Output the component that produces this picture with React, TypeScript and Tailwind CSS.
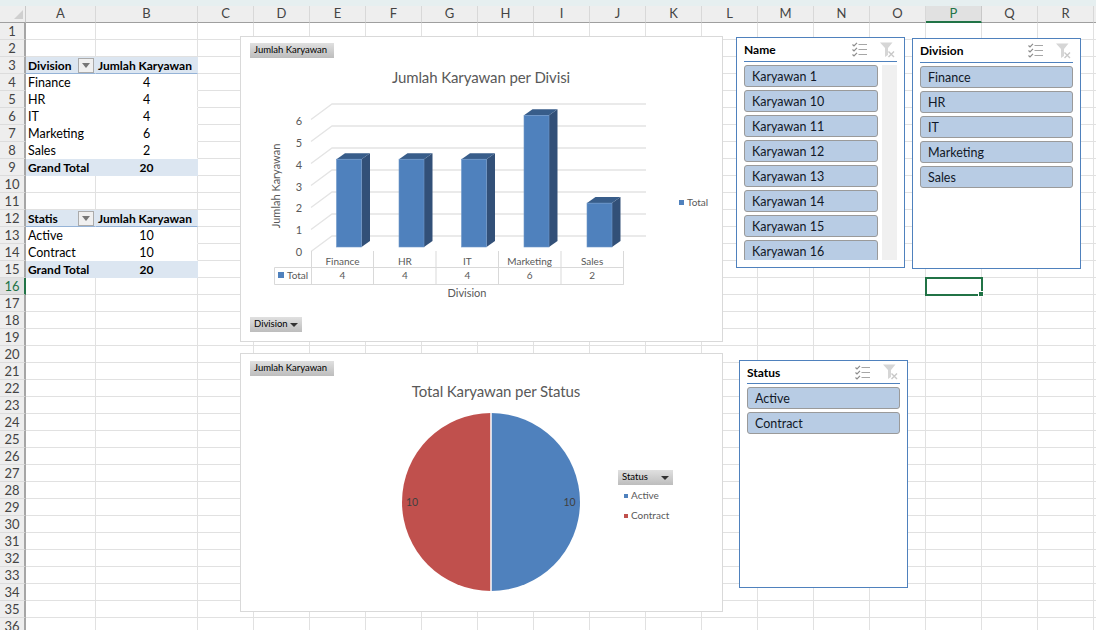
import React from "react";

const columns = ["A","B","C","D","E","F","G","H","I","J","K","L","M","N","O","P","Q","R","S"];
const rows = Array.from({ length: 36 }, (_, i) => i + 1);

type Cell = { text: string; kind: "head" | "label" | "value" | "total" | "totalValue" | "headValue"; filter?: boolean };
const pivot: Record<string, Cell> = {
  A3: { text: "Division", kind: "head", filter: true },
  B3: { text: "Jumlah Karyawan", kind: "headValue" },
  A4: { text: "Finance", kind: "label" }, B4: { text: "4", kind: "value" },
  A5: { text: "HR", kind: "label" }, B5: { text: "4", kind: "value" },
  A6: { text: "IT", kind: "label" }, B6: { text: "4", kind: "value" },
  A7: { text: "Marketing", kind: "label" }, B7: { text: "6", kind: "value" },
  A8: { text: "Sales", kind: "label" }, B8: { text: "2", kind: "value" },
  A9: { text: "Grand Total", kind: "total" }, B9: { text: "20", kind: "totalValue" },
  A12: { text: "Statis", kind: "head", filter: true },
  B12: { text: "Jumlah Karyawan", kind: "headValue" },
  A13: { text: "Active", kind: "label" }, B13: { text: "10", kind: "value" },
  A14: { text: "Contract", kind: "label" }, B14: { text: "10", kind: "value" },
  A15: { text: "Grand Total", kind: "total" }, B15: { text: "20", kind: "totalValue" },
};

const kindClass: Record<Cell["kind"], string> = {
  head: "bg-[#dce6f1] border-b-[#95b3d7] border-r-[#dce6f1] font-bold text-[12px] pl-[2px] justify-between",
  headValue: "bg-[#dce6f1] border-b-[#95b3d7] border-r-[#dce6f1] font-bold text-[12px] justify-center pr-[3px]",
  label: "bg-white border-b-white border-r-white text-[12.5px] pl-[2px]",
  value: "bg-white border-b-white border-r-[#e1e1e1] text-[12.5px] justify-center",
  total: "bg-[#dce6f1] border-b-[#dce6f1] border-r-[#dce6f1] font-bold text-[12px] pl-[2px]",
  totalValue: "bg-[#dce6f1] border-b-[#dce6f1] border-r-[#dce6f1] font-bold text-[12px] justify-center",
};

const textPad: Record<Cell["kind"], string> = {
  head: "pt-[1px]",
  headValue: "pt-[1px]",
  label: "pt-[3px]",
  value: "pt-[3px]",
  total: "pt-[1px]",
  totalValue: "pt-[1px]",
};

function FilterButton() {
  return (
    <span className="flex h-[15px] w-[16px] shrink-0 items-center justify-center border border-[#ababab] bg-[#f0f0f0] mr-px">
      <svg width="8" height="5" viewBox="0 0 8 5"><path d="M0 0h8L4 5z" fill="#777" /></svg>
    </span>
  );
}

function Sheet() {
  return (
    <div className="grid grid-cols-[26px_70px_102px_repeat(17,56px)] auto-rows-[17px] text-[13px] text-black">
      <div className="relative border-b border-r border-b-[#9f9f9f] border-r-[#c8c8c8] bg-[#eeeeee]">
        <svg className="absolute left-[14px] top-[4px]" width="9" height="9" viewBox="0 0 9 9"><path d="M9 0v9H0z" fill="#cfcfcf" /></svg>
      </div>
      {columns.map((c) =>
        c === "P" ? (
          <div key={c} className="flex items-center justify-center border-b-2 border-r border-b-[#217346] border-r-[#c8c8c8] bg-[#e1e1e1] text-[#217346]">{c}</div>
        ) : (
          <div key={c} className="flex items-center justify-center border-b border-r border-b-[#9f9f9f] border-r-[#d8d8d8] bg-[#eeeeee] text-[#444444]">{c}</div>
        ),
      )}
      {rows.map((r) => (
        <React.Fragment key={r}>
          {r === 16 ? (
            <div className="flex items-center justify-center border-b border-r-2 border-b-[#c8c8c8] border-r-[#217346] bg-[#e1e1e1] pt-[1px] text-[#217346]">{r}</div>
          ) : (
            <div className="flex items-center justify-center border-b border-r-2 border-b-[#dcdcdc] border-r-[#a6a6a6] bg-[#eeeeee] pt-[1px] text-[#444444]">{r}</div>
          )}
          {columns.map((c) => {
            const cell = pivot[`${c}${r}`];
            if (cell) {
              return (
                <div key={c} className={`flex items-center whitespace-nowrap border-b border-r ${kindClass[cell.kind]}`}>
                  <span className={textPad[cell.kind]}>{cell.text}</span>
                  {cell.filter && <FilterButton />}
                </div>
              );
            }
            return (
              <div key={c} className="relative border-b border-r border-b-[#e1e1e1] border-r-[#e1e1e1] bg-white">
                {c === "P" && r === 16 && (
                  <div className="absolute -left-px -top-px z-10 h-[19px] w-[58px] border-2 border-[#217346]">
                    <span className="absolute -bottom-[3px] -right-[3px] h-[6px] w-[6px] border border-white bg-[#217346]" />
                  </div>
                )}
              </div>
            );
          })}
        </React.Fragment>
      ))}
    </div>
  );
}

function FieldButton({ label, arrow, className }: { label: string; arrow?: boolean; className: string }) {
  return (
    <div className={`absolute flex h-[15px] items-center justify-between whitespace-nowrap bg-gradient-to-b from-[#e0e0e0] to-[#bdbdbd] pl-[4px] pr-[4px] text-[9.5px] text-black ${className}`}>
      <span>{label}</span>
      {arrow && <svg width="8" height="4" viewBox="0 0 8 4"><path d="M0 0h8L4 4z" fill="#333" /></svg>}
    </div>
  );
}

const bars = [
  { name: "Finance", value: 4, x: 336.5 },
  { name: "HR", value: 4, x: 399 },
  { name: "IT", value: 4, x: 461.5 },
  { name: "Marketing", value: 6, x: 524 },
  { name: "Sales", value: 2, x: 587 },
];
const gridY = [104, 126, 148, 170, 192, 214, 236];
const OX = 241;
const OY = 37;

function BarChart() {
  const base = 247;
  const unit = 21.95;
  return (
    <div className="absolute left-[240px] top-[36px] h-[306px] w-[483px] border border-[#d9d9d9] bg-white">
      <svg className="absolute left-0 top-0" width="481" height="304" viewBox={`${OX} ${OY} 481 304`}>
        <text x="481" y="83" textAnchor="middle" className="fill-[#595959] text-[15px] tracking-[-0.1px]">Jumlah Karyawan per Divisi</text>
        {gridY.map((y) => (
          <g key={y} stroke="#e4e4e4" fill="none">
            <path d={`M311 ${y + 15.5}L332 ${y}H646`} strokeWidth="1.3" />
          </g>
        ))}
        {[0,1,2,3,4,5,6].map((v) => (
          <text key={v} x="299" y={256 - v * 21.83} textAnchor="middle" className="fill-[#595959] text-[11px]">{v}</text>
        ))}
        <text transform="translate(280 186) rotate(-90)" textAnchor="middle" className="fill-[#595959] text-[11px]">Jumlah Karyawan</text>
        {bars.map((b) => {
          const top = base - b.value * unit;
          return (
            <g key={b.name}>
              <path d={`M${b.x + 25} ${top}l8.5 -6V${base - 6}L${b.x + 25} ${base}z`} fill="#325078" />
              <path d={`M${b.x} ${top}l8.5 -6h25l-8.5 6z`} fill="#385d8a" />
              <rect x={b.x} y={top} width="25" height={base - top} fill="#4f81bd" stroke="#6f97c8" strokeWidth="0.6" />
            </g>
          );
        })}
        <path d="M311.5 251V284.5M373.5 251V284.5M436 251V284.5M498.5 251V284.5M561 251V284.5M623.5 251V284.5M274.5 267.5H623.5V284.5H274.5V267.5" fill="none" stroke="#d9d9d9" />
        {bars.map((b, i) => {
          const c = 342.5 + i * 62.4;
          return (
            <g key={b.name}>
              <text x={c} y="265" textAnchor="middle" className="fill-[#595959] text-[10px]">{b.name}</text>
              <text x={c} y="279" textAnchor="middle" className="fill-[#595959] text-[10px]">{b.value}</text>
            </g>
          );
        })}
        <rect x="278" y="272" width="6" height="6" fill="#4f81bd" />
        <text x="287" y="279" className="fill-[#595959] text-[10px]">Total</text>
        <text x="467" y="297" textAnchor="middle" className="fill-[#595959] text-[11px]">Division</text>
        <rect x="679" y="200" width="5" height="5" fill="#4f81bd" />
        <text x="687" y="206" className="fill-[#595959] text-[10px]">Total</text>
      </svg>
      <FieldButton label="Jumlah Karyawan" className="left-[9px] top-[6px] w-[84px]" />
      <FieldButton label="Division" arrow className="left-[9px] top-[280px] w-[52px]" />
    </div>
  );
}

function PieChart() {
  return (
    <div className="absolute left-[240px] top-[353px] h-[259px] w-[483px] border border-[#d9d9d9] bg-white">
      <svg className="absolute left-0 top-0" width="481" height="257" viewBox="241 354 481 257">
        <text x="496" y="397" textAnchor="middle" className="fill-[#595959] text-[15px] tracking-[-0.1px]">Total Karyawan per Status</text>
        <path d="M491 413A89 89 0 0 1 491 591Z" fill="#4f81bd" />
        <path d="M491 413A89 89 0 0 0 491 591Z" fill="#c0504d" />
        <path d="M491 412V592" stroke="#ffffff" strokeWidth="1.5" />
        <text x="569.5" y="506" textAnchor="middle" className="fill-[#404040] text-[10.5px]">10</text>
        <text x="412" y="506" textAnchor="middle" className="fill-[#404040] text-[10.5px]">10</text>
        <rect x="624" y="494" width="4" height="4" fill="#4f81bd" />
        <text x="631" y="499" className="fill-[#595959] text-[10px]">Active</text>
        <rect x="624" y="514" width="4" height="4" fill="#c0504d" />
        <text x="631" y="519" className="fill-[#595959] text-[10px]">Contract</text>
      </svg>
      <FieldButton label="Jumlah Karyawan" className="left-[9px] top-[7px] w-[84px]" />
      <FieldButton label="Status" arrow className="left-[377px] top-[116px] w-[55px]" />
    </div>
  );
}

function MultiSelectIcon() {
  return (
    <svg width="15" height="15" viewBox="0 0 15 15" fill="none">
      <path d="M6.5 2.5H15M6.5 7.5H15M6.5 12.5H15" stroke="#a6a6a6" strokeWidth="1.2" />
      <path d="M0.5 2.5L2 4L5 0.8M0.5 7.5L2 9L5 5.8M0.5 12.5L2 14L5 10.8" stroke="#8c8c8c" strokeWidth="1.2" />
    </svg>
  );
}

function ClearFilterIcon() {
  return (
    <svg width="15" height="16" viewBox="0 0 15 16" fill="none">
      <path d="M0 0.5H12.5L8 6V13L5 15V6z" fill="#d6d6d6" />
      <path d="M8.5 9.5L14 15M14 9.5L8.5 15" stroke="#c8c8c8" strokeWidth="1.4" />
    </svg>
  );
}

function Slicer({ title, items, className, headerClass, scroll }: { title: string; items: string[]; className: string; headerClass: string; scroll?: boolean }) {
  return (
    <div className={`absolute w-[169px] border border-[#4f81bd] bg-white px-[7px] ${className}`}>
      <div className={`flex items-center justify-between border-b border-[#4f81bd] ${headerClass}`}>
        <span className="pt-[1px] text-[12px] font-bold text-black">{title}</span>
        <span className="flex items-center gap-[13px] pr-[2px]">
          <MultiSelectIcon />
          <ClearFilterIcon />
        </span>
      </div>
      <div className="mt-[3px] flex items-start justify-between">
        <div className={scroll ? "flex h-[195px] w-[134px] flex-col gap-[3px] overflow-hidden" : "flex w-full flex-col gap-[3px]"}>
          {items.map((item) => (
            <div key={item} className="flex h-[22px] shrink-0 items-center rounded-[3px] border border-[#9a9a9a] bg-[#b8cce4] pl-[7px] pt-[2px] text-[12.5px] text-[#111827]">
              {item}
            </div>
          ))}
        </div>
        {scroll && <div className="h-[195px] w-[15px] bg-[#f0f0f0]" />}
      </div>
    </div>
  );
}

export default function App() {
  return (
    <div className="relative h-[630px] w-full overflow-hidden bg-white font-[family-name:Lato,sans-serif]">
      <div className="h-[6px] bg-[#e6eff0]" />
      <Sheet />
      <BarChart />
      <PieChart />
      <Slicer
        title="Name"
        scroll
        headerClass="h-[24px]"
        className="left-[736px] top-[37px] h-[231px]"
        items={["Karyawan 1","Karyawan 10","Karyawan 11","Karyawan 12","Karyawan 13","Karyawan 14","Karyawan 15","Karyawan 16"]}
      />
      <Slicer
        title="Division"
        headerClass="h-[24px]"
        className="left-[912px] top-[38px] h-[231px]"
        items={["Finance","HR","IT","Marketing","Sales"]}
      />
      <Slicer
        title="Status"
        headerClass="h-[23px]"
        className="left-[739px] top-[360px] h-[228px]"
        items={["Active","Contract"]}
      />
    </div>
  );
}
